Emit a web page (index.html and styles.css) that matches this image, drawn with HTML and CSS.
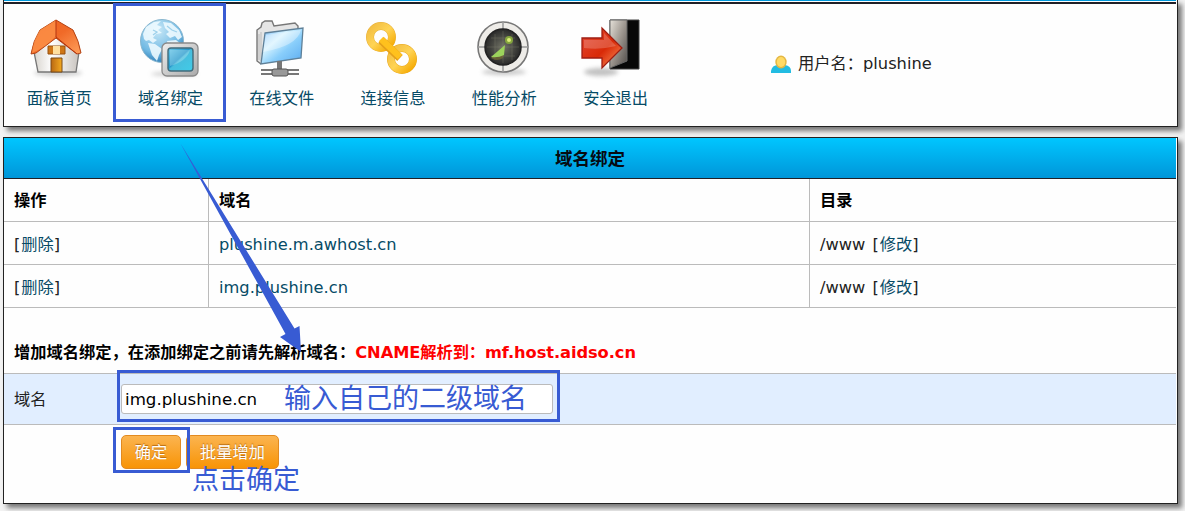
FILE: index.html
```html
<!DOCTYPE html>
<html lang="zh-CN">
<head>
<meta charset="utf-8">
<title>域名绑定</title>
<link rel="stylesheet" href="styles.css">
</head>
<body>
<header class="panel top-panel">
  <div class="top-strip"></div>
  <div class="top-content">
    <nav class="nav">
      <a class="nav-item"><svg viewBox="2 0 60 60"><defs><linearGradient id="roof" x2="1" y2="1"><stop stop-color="#ef6020"/><stop offset=".5" stop-color="#f06a28"/><stop offset="1" stop-color="#ffa05c"/></linearGradient><linearGradient id="wall" x2="1"><stop stop-color="#d8d4ce"/><stop offset=".4" stop-color="#fff"/><stop offset="1" stop-color="#c9c4bf"/></linearGradient><linearGradient id="door" x2="1"><stop stop-color="#b96813"/><stop offset="1" stop-color="#f4aa20"/></linearGradient><filter id="soft" x="-30%" y="-100%" width="160%" height="300%"><feGaussianBlur stdDeviation="2"/></filter></defs><ellipse cx="30" cy="55" rx="24" ry="3" fill="#999" opacity=".5" filter="url(#soft)"/><path d="M6 34 28 19 51 34 48 54H10Z" fill="url(#wall)" stroke="#777" stroke-width="1.3"/><path d="M28 2 12 12Q5 23 3 36L8 35 28 20 49 36 53 35Q51 23 45 12Z" fill="url(#roof)" stroke="#b34213"/><path d="M28 2 12 12Q5 23 4 35 18 29 28 18Z" fill="#ff9b50" opacity=".65"/><path d="M28 2V19L49 36" fill="none" stroke="#b53410"/><path d="M20 28H37V36H20Z" fill="#cf7617" stroke="#965010"/><path d="M25 28H32V36H25Z" fill="#ffe0a0"/><path d="M23 40H34V54H23Z" fill="url(#door)" stroke="#7a4a18"/></svg><span>面板首页</span></a>
      <a class="nav-item"><svg viewBox="2 0 60 60"><defs><radialGradient id="globe" cx=".4" cy=".25" r=".8"><stop stop-color="#c8e8f7"/><stop offset=".65" stop-color="#71b9e3"/><stop offset="1" stop-color="#2676b2"/></radialGradient><linearGradient id="screen" x2="1" y2="1"><stop stop-color="#68c8ea"/><stop offset=".45" stop-color="#2498cc"/><stop offset=".5" stop-color="#48bddd"/><stop offset="1" stop-color="#40cce8"/></linearGradient><linearGradient id="metal" y2="1"><stop stop-color="#eee"/><stop offset="1" stop-color="#aaa"/></linearGradient></defs><ellipse cx="35" cy="56" rx="23" ry="2" fill="#999" opacity=".5" filter="url(#soft)"/><circle cx="23" cy="23" r="21.5" fill="url(#globe)" stroke="#8ab7cf"/><path d="M4 16 7 9 15 4 22 3 18 7 23 9 19 12 23 15 17 16 14 20 18 22 14 25 10 22 7 23 5 21ZM24 4 32 5 40 12 43 19 39 22 36 18 31 20 27 16 30 14 26 10ZM9 25 16 26 23 31 20 37 18 43 13 37 11 31ZM28 23 37 22 42 26 36 34 30 32Z" fill="#effaff" opacity=".88"/><path d="M14 12 18 14 14 17M28 8 33 12 38 14M31 25 35 28" fill="none" stroke="#9ed1eb" stroke-width="1.3"/><rect x="23" y="25" width="36" height="33" rx="5" fill="url(#metal)" stroke="#898989" stroke-width="1.3"/><rect x="29" y="30" width="25" height="23" rx="3" fill="url(#screen)" stroke="#426b7b" stroke-width="1.4"/><path d="M31 48V32H51Q48 43 31 48Z" fill="#fff" opacity=".24"/></svg><span>域名绑定</span></a>
      <a class="nav-item"><svg viewBox="0 0 60 60"><defs><linearGradient id="folder" x2="1" y2="1"><stop stop-color="#7dbdfa"/><stop offset=".35" stop-color="#d4f2ff"/><stop offset=".6" stop-color="#89cefb"/><stop offset="1" stop-color="#58a9ef"/></linearGradient></defs><path d="M9 46 5 43V12L9 9 10 5 13 3H20L22 8 43 5 46 8V12" fill="#e5e5e5" stroke="#777" stroke-width="1.4"/><path d="M7 16V42M9 14V43" stroke="#bbb"/><path d="M13 15 51 10 49 40 9 46Z" fill="url(#folder)" stroke="#5f8098" stroke-width="1.3"/><path d="M14 17 49 12Q45 28 11 34Z" fill="white" opacity=".35"/><path d="M25 43H30V51H25Z" fill="#777"/><path d="M9 52H47M9 56H47" stroke="#777" stroke-width="2"/><rect x="20" y="51" width="16" height="7" rx="2" fill="#999" stroke="#555"/></svg><span>在线文件</span></a>
      <a class="nav-item"><svg viewBox="0 0 60 60"><defs><linearGradient id="gold" x2="1" y2="1"><stop stop-color="#f2bd42"/><stop offset=".5" stop-color="#ffd455"/><stop offset="1" stop-color="#f5a900"/></linearGradient></defs><circle cx="17" cy="19" r="11" fill="none" stroke="#e8b03a" stroke-width="8"/><circle cx="17" cy="19" r="11" fill="none" stroke="url(#gold)" stroke-width="7"/><circle cx="38" cy="41" r="11" fill="none" stroke="#e8a820" stroke-width="8"/><circle cx="38" cy="41" r="11" fill="none" stroke="url(#gold)" stroke-width="7"/><path d="M17 22 36 40" stroke="#e5a01a" stroke-width="8"/><path d="M17 21 36 39" stroke="#ffc11d" stroke-width="6.5"/></svg><span>连接信息</span></a>
      <a class="nav-item"><svg viewBox="0 0 60 60"><defs><radialGradient id="radar"><stop stop-color="#727366"/><stop offset="1" stop-color="#292929"/></radialGradient></defs><ellipse cx="29" cy="54" rx="22" ry="3" fill="#777" opacity=".4" filter="url(#soft)"/><circle cx="28" cy="29" r="25" fill="#eeece8" stroke="#777" stroke-width="1.6"/><path d="M28 4V54M3 29H53" stroke="#999" stroke-width="1.5"/><circle cx="28" cy="29" r="18" fill="url(#radar)" stroke="#222" stroke-width="1.5"/><path d="M12 29H44M28 13V45M16 20H40M16 38H40M20 16V42M37 16V42" stroke="#898b76" stroke-width=".6" opacity=".5"/><path d="M30 28 28 40Q22 44 16 40Z" fill="#766c32" opacity=".7"/><path d="M30 27 16 39Q23 40 29 37Z" fill="#9cd35c"/><circle cx="34" cy="22" r="4" fill="#84a43d"/><circle cx="34" cy="22" r="2" fill="#ddef77"/></svg><span>性能分析</span></a>
      <a class="nav-item"><svg viewBox="0 0 60 60"><defs><linearGradient id="leaf" x2="1" y2="1"><stop stop-color="#e5e1d9"/><stop offset=".5" stop-color="#9b948d"/><stop offset="1" stop-color="#4f4b48"/></linearGradient><linearGradient id="arrow" x2="1" y2="1"><stop stop-color="#e44a37"/><stop offset=".55" stop-color="#d92a08"/><stop offset="1" stop-color="#ff9b60"/></linearGradient></defs><ellipse cx="15" cy="54" rx="17" ry="4" fill="#777" opacity=".45" filter="url(#soft)"/><path d="M24 2H53V51H24Z" fill="#080808" stroke="#444"/><path d="M24 2H41V43L24 50Z" fill="url(#leaf)" stroke="#666"/><path d="M-4 20H16V10L36 30 16 50V40H-4Z" fill="url(#arrow)" stroke="#9f1e13" stroke-width="1.3"/><path d="M-2 22H18V15L30 28Q15 32-2 30Z" fill="white" opacity=".2"/></svg><span>安全退出</span></a>
    </nav>
    <div class="user"><svg viewBox="0 0 20 19"><path d="M0 16Q1 10 7 10H14Q20 11 20 16V18H0Z" fill="#22bce2"/><ellipse cx="10" cy="7" rx="5.7" ry="6.5" fill="#e4b743"/><ellipse cx="10" cy="7" rx="4.2" ry="5" fill="#ffda65"/></svg><span>用户名：plushine</span></div>
  </div>
</header>
<main class="panel main-panel">
  <h1>域名绑定</h1>
  <section class="grid">
    <div class="row head"><div>操作</div><div>域名</div><div>目录</div></div>
    <div class="row"><div><i>[</i><a>删除</a><i>]</i></div><div><a>plushine.m.awhost.cn</a></div><div>/www <i>[</i><a>修改</a><i>]</i></div></div>
    <div class="row"><div><i>[</i><a>删除</a><i>]</i></div><div><a>img.plushine.cn</a></div><div>/www <i>[</i><a>修改</a><i>]</i></div></div>
  </section>
  <h2>增加域名绑定，在添加绑定之前请先解析域名：<em>CNAME解析到：mf.host.aidso.cn</em></h2>
  <form>
    <div class="field"><label for="domain">域名</label><input id="domain" value="img.plushine.cn"></div>
    <div class="actions"><button type="button">确定</button><button type="button">批量增加</button></div>
  </form>
</main>
<svg class="marks" viewBox="0 0 1185 511">
  <g fill="none" stroke="#385bd3" stroke-width="3"><path d="M114.5 4.5H224.5V120.5H114.5ZM118.5 371.5H558.5V420.5H118.5ZM114.5 428.5H188.5V471.5H114.5Z"/></g>
  <path d="M180.5 143.5 294.5 328.5 299.5 326 301 352 280 337 285.5 334Z" fill="#385bd3"/>
</svg>
<div class="note note-input">输入自己的二级域名</div>
<div class="note note-confirm">点击确定</div>
</body>
</html>
```
FILE: styles.css
```css
* { box-sizing: border-box; }
body { margin: 0; height: 511px; padding: 0 7px 0 3px; overflow: hidden; background: #f3f3f3; color: #222; font: 16.25px/24px "DejaVu Sans", "Noto Sans CJK SC", sans-serif; }
a { color: #064b66; }
i { font-style: normal; letter-spacing: .9px; }
.panel { width: 1175px; background: #fefefe; border: 1px solid #222; box-shadow: 4px 4px 5px #777; }
.top-panel { height: 127px; border-top: 0; padding-right: 1px; }
.top-strip { height: 4px; border-top: 1px solid #0099dc; border-bottom: 2px solid #202027; }
.top-content { display: flex; align-items: flex-start; }
.nav { display: flex; width: 668px; }
.nav-item { width: 111.3px; padding-top: 14px; text-align: center; }
.nav-item svg { display: block; width: 60px; height: 60px; margin: 0 auto; overflow: visible; }
.nav-item span { display: block; margin: 9px 1px 0 0; }
.user { display: flex; align-items: center; gap: 7px; padding: 48px 0 0 99px; }
.user svg { width: 20px; height: 19px; }
.main-panel { height: 367px; margin-top: 10px; padding-right: 1px; }
h1 { margin: 0; height: 41px; padding-top: 8px; border-bottom: 1px solid #202027; background: linear-gradient(#00c6ff, #0096d9); color: #060b12; text-align: center; font-size: 17.5px; line-height: 26px; }
.row { display: grid; grid-template-columns: 205px 601px 1fr; height: 43px; border-bottom: 1px solid #bbb; }
.row > div { padding: 11px 10px 0; border-right: 1px solid #bbb; }
.row > div:last-child { border-right: 0; word-spacing: 2px; }
.head { color: #000; font-weight: bold; }
.head > div { padding-top: 10px; }
h2 { height: 65px; margin: 0; padding: 33px 0 0 10px; color: #000; font-size: 16.25px; line-height: 24px; white-space: nowrap; }
em { color: #f00; font-style: normal; letter-spacing: -.07px; }
.field { display: flex; align-items: center; height: 52px; border: solid #bbb; border-width: 1px 0; background: #e1eeff; }
label { width: 117px; padding: 1px 0 0 10px; }
input { width: 432px; height: 30px; padding: 2px 3px 1px; border: 1px solid #bbb; border-radius: 3px; color: #000; background: #fff; font: 16.67px "DejaVu Sans", "Noto Sans CJK SC", sans-serif; }
.actions { display: flex; gap: 5px; padding: 10px 0 0 117px; }
button { height: 34px; padding: 1px 12px 0; border: 1px solid #e28a20; border-radius: 5px; background: linear-gradient(#fbb450, #f89406); color: #fff; font: inherit; text-shadow: 0 -1px 1px #b56b13; white-space: nowrap; }
button:first-child { width: 60px; }
button:last-child { width: 93px; }
.marks { position: absolute; inset: 0; width: 1185px; height: 511px; }
.note { position: absolute; color: #385bd3; font: 27px/36px "Noto Sans CJK SC", sans-serif; white-space: nowrap; }
.note-input { left: 284px; top: 379px; }
.note-confirm { left: 192px; top: 460px; }
```
